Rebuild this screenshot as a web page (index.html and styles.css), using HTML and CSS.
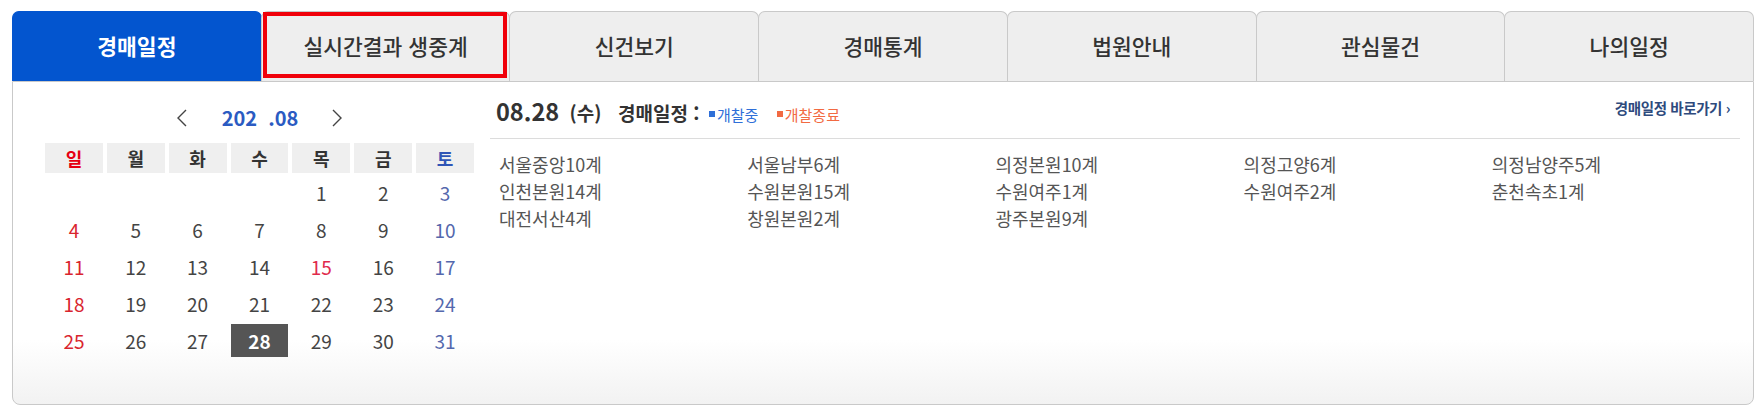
FILE: index.html
```html
<!DOCTYPE html>
<html lang="ko">
<head>
<meta charset="utf-8">
<title>경매일정</title>
<link rel="stylesheet" href="styles.css">
</head>
<body>
<div class="wrap">
  <ul class="tabs">
    <li class="tab active">경매일정</li>
    <li class="tab marked">실시간결과 생중계</li>
    <li class="tab">신건보기</li>
    <li class="tab">경매통계</li>
    <li class="tab">법원안내</li>
    <li class="tab">관심물건</li>
    <li class="tab">나의일정</li>
  </ul>
  <div class="panel">
    <div class="calendar">
      <div class="cal-nav">
        <svg class="arrow" width="12" height="20" viewBox="0 0 12 20"><polyline points="10,2 2,10 10,18" fill="none" stroke="#444" stroke-width="1.4"/></svg>
        <span class="month">202&nbsp;&nbsp;.08</span>
        <svg class="arrow" width="12" height="20" viewBox="0 0 12 20"><polyline points="2,2 10,10 2,18" fill="none" stroke="#444" stroke-width="1.4"/></svg>
      </div>
      <div class="cal-head">
        <span class="sun">일</span><span>월</span><span>화</span><span>수</span><span>목</span><span>금</span><span class="sat">토</span>
      </div>
      <div class="cal-body">
        <span></span><span></span><span></span><span></span><span>1</span><span>2</span><span class="sat">3</span>
        <span class="sun">4</span><span>5</span><span>6</span><span>7</span><span>8</span><span>9</span><span class="sat">10</span>
        <span class="sun">11</span><span>12</span><span>13</span><span>14</span><span class="hol">15</span><span>16</span><span class="sat">17</span>
        <span class="sun">18</span><span>19</span><span>20</span><span>21</span><span>22</span><span>23</span><span class="sat">24</span>
        <span class="sun">25</span><span>26</span><span>27</span><span class="today">28</span><span>29</span><span>30</span><span class="sat">31</span>
      </div>
    </div>
    <div class="schedule">
      <div class="sch-head">
        <div class="sch-title">
          <span class="date">08.28</span>
          <span class="dow">(수)</span>
          <span class="label">경매일정 :</span>
          <span class="lg lg-on"><i></i>개찰중</span>
          <span class="lg lg-off"><i></i>개찰종료</span>
        </div>
        <a class="go">경매일정 바로가기 ›</a>
      </div>
      <ul class="courts">
        <li>서울중앙10계</li>
        <li>서울남부6계</li>
        <li>의정본원10계</li>
        <li>의정고양6계</li>
        <li>의정남양주5계</li>
        <li>인천본원14계</li>
        <li>수원본원15계</li>
        <li>수원여주1계</li>
        <li>수원여주2계</li>
        <li>춘천속초1계</li>
        <li>대전서산4계</li>
        <li>창원본원2계</li>
        <li>광주본원9계</li>
      </ul>
    </div>
  </div>
</div>
</body>
</html>
```

FILE: styles.css
```css
* { box-sizing: border-box; }
html, body { margin: 0; padding: 0; background: #fff; }
body {
  font-family: "Noto Sans CJK KR", "Noto Sans", sans-serif;
  color: #333;
}
.wrap { padding: 11px 3px 0 12px; }

.tabs {
  list-style: none;
  margin: 0;
  padding: 0;
  display: flex;
  height: 70px;
}
.tab {
  flex: 1;
  position: relative;
  display: flex;
  align-items: center;
  justify-content: center;
  border: 1px solid #c9c9c9;
  border-bottom: none;
  border-radius: 7px 7px 0 0;
  background: #eeeeee;
  margin-left: -1px;
  font-size: 21.5px;
  font-weight: 500;
  color: #333;
  line-height: 1;
  padding-bottom: 2px;
}
.tab:first-child { margin-left: 0; }
.tab.active {
  background: #0355cf;
  border-color: #0355cf;
  color: #fff;
  font-weight: 700;
}
.tab.marked::after {
  content: "";
  position: absolute;
  left: 1px; right: 2px; top: 0; bottom: 3px;
  border: 4px solid #f0000a;
}

.panel {
  display: flex;
  height: 324px;
  border: 1px solid #c9c9c9;
  border-radius: 0 0 8px 8px;
  background: linear-gradient(to bottom, #fff 0, #fff 258px, #f2f2f2 100%);
  padding: 0 13px 0 32px;
}

.calendar { width: 429px; padding-top: 22px; }
.cal-nav {
  height: 28px;
  display: flex;
  align-items: center;
  justify-content: center;
  margin-bottom: 11px;
}
.cal-nav .arrow { display: block; }
.month {
  font-size: 20px;
  font-weight: 700;
  color: #2b5bc2;
  margin: 0 33px 0 34px;
  line-height: 1;
}
.cal-head, .cal-body {
  display: grid;
  grid-template-columns: repeat(7, 1fr);
  column-gap: 4px;
}
.cal-head span {
  height: 30px;
  background: #efefef;
  display: flex;
  align-items: center;
  justify-content: center;
  font-size: 18px;
  font-weight: 700;
  color: #333;
}
.cal-head .sun { color: #e60012; }
.cal-head .sat { color: #2f55b6; }
.cal-body { margin-top: 3px; grid-auto-rows: 33px; row-gap: 4px; }
.cal-body span {
  display: flex;
  align-items: center;
  justify-content: center;
  font-size: 19px;
  color: #444;
  line-height: 1;
}
.cal-body .sun { color: #d9252e; }
.cal-body .sat { color: #5468ad; }
.cal-body .hol { color: #e02a4c; }
.cal-body .today {
  background: #555;
  color: #fff;
  font-weight: 700;
}

.schedule { flex: 1; margin-left: 16px; }
.sch-head {
  display: flex;
  justify-content: space-between;
  align-items: flex-start;
  height: 57px;
  padding: 18px 10px 0 6px;
  border-bottom: 1px solid #dcdcdc;
}
.sch-title { line-height: 1; white-space: nowrap; }
.date { font-size: 23.5px; font-weight: 700; color: #333; }
.dow { font-size: 19px; font-weight: 700; color: #333; margin-left: 6px; }
.label { font-size: 19px; font-weight: 700; color: #333; margin-left: 12px; }
.lg { font-size: 15px; margin-left: 5px; }
.lg i { display: inline-block; width: 6px; height: 6px; margin-right: 2px; vertical-align: 4px; }
.lg-on { color: #2f6fd8; }
.lg-on i { background: #2f6fd8; }
.lg-off { color: #f26a42; margin-left: 14px; }
.lg-off i { background: #f26a42; }
.go {
  font-size: 14.5px;
  color: #2e4a7d;
  letter-spacing: -0.4px;
  font-weight: 700;
  margin-top: 1px;
  line-height: 1;
}

.courts {
  list-style: none;
  margin: 0;
  padding: 12px 0 0 9px;
  display: grid;
  grid-template-columns: repeat(5, 1fr);
}
.courts li {
  font-size: 18px;
  line-height: 27px;
  color: #555;
}
```
